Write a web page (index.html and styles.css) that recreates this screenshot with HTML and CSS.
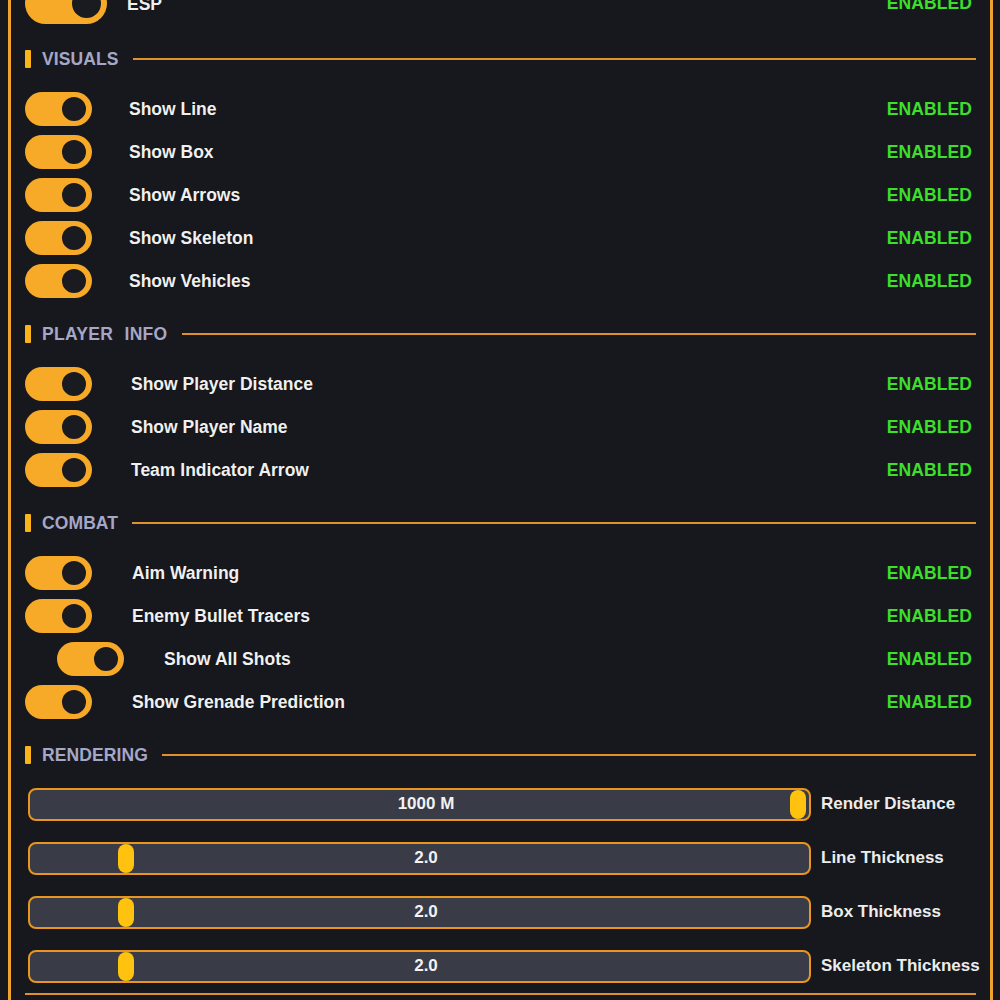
FILE: index.html
```html
<!DOCTYPE html>
<html lang="en">
<head>
<meta charset="utf-8">
<title>ESP Settings</title>
<link rel="stylesheet" href="styles.css">
</head>
<body>
<div class="panel">
  <div class="row row-esp">
    <div class="toggle toggle-big"><span class="knob"></span></div>
    <span class="label label-esp">ESP</span>
    <span class="status">ENABLED</span>
  </div>

  <div class="section-head"><span class="mark"></span><span class="title">VISUALS</span><span class="rule"></span></div>
  <div class="row"><div class="toggle"><span class="knob"></span></div><span class="label">Show Line</span><span class="status">ENABLED</span></div>
  <div class="row"><div class="toggle"><span class="knob"></span></div><span class="label">Show Box</span><span class="status">ENABLED</span></div>
  <div class="row"><div class="toggle"><span class="knob"></span></div><span class="label">Show Arrows</span><span class="status">ENABLED</span></div>
  <div class="row"><div class="toggle"><span class="knob"></span></div><span class="label">Show Skeleton</span><span class="status">ENABLED</span></div>
  <div class="row"><div class="toggle"><span class="knob"></span></div><span class="label">Show Vehicles</span><span class="status">ENABLED</span></div>

  <div class="section-head"><span class="mark"></span><span class="title title-wide">PLAYER  INFO</span><span class="rule"></span></div>
  <div class="row"><div class="toggle"><span class="knob"></span></div><span class="label label-b">Show Player Distance</span><span class="status">ENABLED</span></div>
  <div class="row"><div class="toggle"><span class="knob"></span></div><span class="label label-b">Show Player Name</span><span class="status">ENABLED</span></div>
  <div class="row"><div class="toggle"><span class="knob"></span></div><span class="label label-b">Team Indicator Arrow</span><span class="status">ENABLED</span></div>

  <div class="section-head"><span class="mark"></span><span class="title">COMBAT</span><span class="rule"></span></div>
  <div class="row"><div class="toggle"><span class="knob"></span></div><span class="label label-c">Aim Warning</span><span class="status">ENABLED</span></div>
  <div class="row"><div class="toggle"><span class="knob"></span></div><span class="label label-c">Enemy Bullet Tracers</span><span class="status">ENABLED</span></div>
  <div class="row row-sub"><div class="toggle"><span class="knob"></span></div><span class="label label-c">Show All Shots</span><span class="status">ENABLED</span></div>
  <div class="row"><div class="toggle"><span class="knob"></span></div><span class="label label-c">Show Grenade Prediction</span><span class="status">ENABLED</span></div>

  <div class="section-head"><span class="mark"></span><span class="title">RENDERING</span><span class="rule"></span></div>
  <div class="sliders">
    <div class="slider-row">
      <div class="slider"><span class="handle" style="left: 97.6%"></span><span class="value">1000 M</span></div>
      <span class="slider-label">Render Distance</span>
    </div>
    <div class="slider-row">
      <div class="slider"><span class="handle" style="left: 11.3%"></span><span class="value">2.0</span></div>
      <span class="slider-label">Line Thickness</span>
    </div>
    <div class="slider-row">
      <div class="slider"><span class="handle" style="left: 11.3%"></span><span class="value">2.0</span></div>
      <span class="slider-label">Box Thickness</span>
    </div>
    <div class="slider-row">
      <div class="slider"><span class="handle" style="left: 11.3%"></span><span class="value">2.0</span></div>
      <span class="slider-label">Skeleton Thickness</span>
    </div>
  </div>
  <div class="bottom-rule"></div>
</div>
</body>
</html>
```

FILE: styles.css
```css
html, body {
  margin: 0;
  padding: 0;
  background: #16181d;
  height: 100%;
  overflow: hidden;
}

body {
  font-family: "Liberation Sans", Arial, sans-serif;
  font-weight: bold;
  color: #eeeeee;
}

.panel {
  display: flex;
  flex-direction: column;
  box-sizing: border-box;
  height: 1000px;
  margin-left: 8px;
  margin-right: 7px;
  border-left: 3px solid #f0a22e;
  border-right: 3px solid #f0a22e;
  padding: 0 14px;
}

.row {
  display: flex;
  align-items: center;
  height: 43px;
  flex: none;
}

.row-esp {
  height: 41px;
  margin-top: -17px;
}

.row-sub {
  padding-left: 32px;
}

.toggle {
  position: relative;
  box-sizing: border-box;
  width: 67px;
  height: 34px;
  border-radius: 17px;
  background: #f7a928;
  flex: none;
  display: flex;
  align-items: center;
  justify-content: flex-end;
  padding-right: 4px;
}

.knob {
  box-sizing: border-box;
  width: 28px;
  height: 28px;
  border-radius: 50%;
  background: #1a1b20;
  border: 2px solid #f7a928;
}

.toggle-big {
  width: 82px;
  height: 41px;
  border-radius: 21px;
  padding-right: 4px;
}

.toggle-big .knob {
  width: 33px;
  height: 33px;
}

.label {
  font-size: 17.5px;
  margin-left: 37px;
  color: #f0f0f0;
  text-shadow: 0 0 1px rgba(0,0,0,0.6);
}

.label-esp {
  margin-left: 20px;
  margin-top: 2px;
}

.label-b { margin-left: 39px; }
.label-c { margin-left: 40px; }

.status {
  margin-left: auto;
  margin-right: 4px;
  font-size: 17.5px;
  color: #3ddf2b;
  letter-spacing: 0.1px;
}

.section-head {
  display: flex;
  align-items: center;
  height: 30px;
  flex: none;
  margin-top: 16.5px;
  margin-bottom: 13.5px;
}

.row-esp + .section-head {
  margin-top: 20px;
}

.mark {
  width: 6px;
  height: 18px;
  background: #fbb417;
  border-radius: 1px;
  flex: none;
}

.title {
  margin-left: 11px;
  font-size: 17.5px;
  color: #a6a7c6;
  white-space: pre;
  letter-spacing: 0.1px;
}

.title-wide {
  letter-spacing: 0.3px;
  word-spacing: 0.5px;
}

.rule {
  flex: 1;
  height: 2px;
  margin-left: 14px;
  background: #e0902c;
}

.sliders {
  display: flex;
  flex-direction: column;
  gap: 21px;
  padding-top: 4px;
  flex: none;
}

.slider-row {
  display: flex;
  align-items: center;
  height: 33px;
}

.slider {
  position: relative;
  box-sizing: border-box;
  width: 783px;
  height: 33px;
  margin-left: 3px;
  border: 2px solid #e8961f;
  border-radius: 8px;
  background: #393c47;
  display: flex;
  align-items: center;
  justify-content: center;
  padding-left: 13px;
  flex: none;
}

.handle {
  position: absolute;
  top: 0;
  width: 16px;
  height: 29px;
  border-radius: 8px;
  background: #ffc20e;
}

.value {
  font-size: 17px;
  color: #f2f2f2;
}

.slider-label {
  margin-left: 10px;
  font-size: 17px;
  color: #ececec;
  white-space: nowrap;
}

.bottom-rule {
  flex: none;
  height: 2px;
  margin-top: 10.5px;
  background: #e0902c;
}
```
